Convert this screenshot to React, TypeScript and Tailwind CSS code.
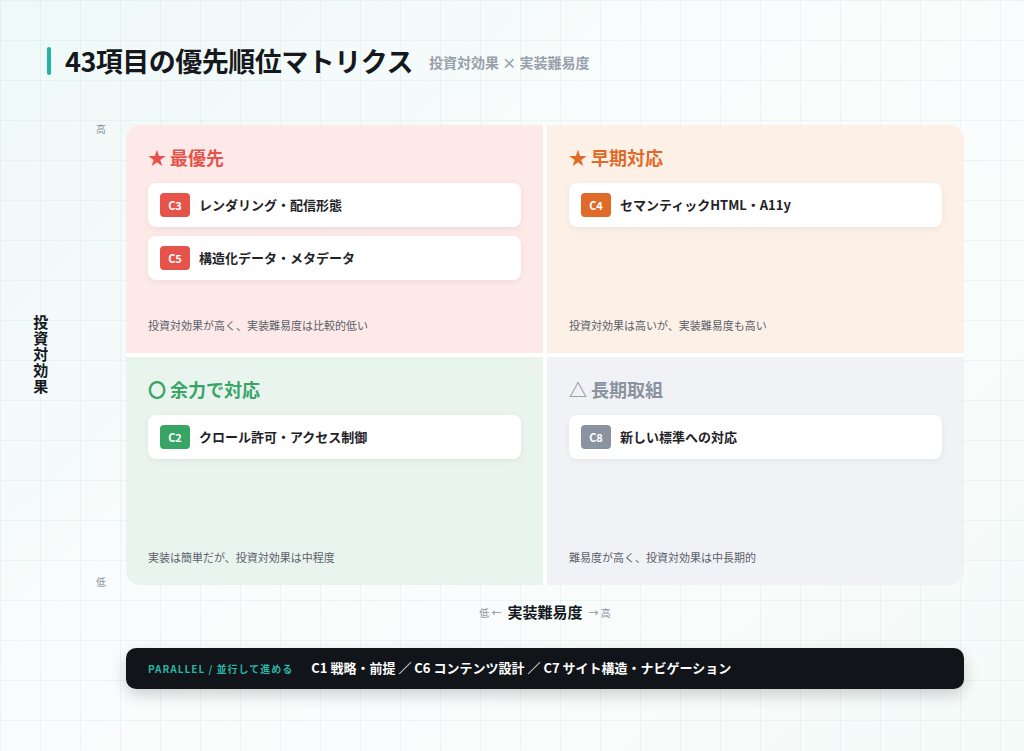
import React from "react";

type Item = { code: string; label: string };
type Quad = {
  title: string;
  items: Item[];
  note: string;
  bg: string;
  fg: string;
  badge: string;
};

const quads: Quad[] = [
  {
    title: "★ 最優先",
    items: [
      { code: "C3", label: "レンダリング・配信形態" },
      { code: "C5", label: "構造化データ・メタデータ" },
    ],
    note: "投資対効果が高く、実装難易度は比較的低い",
    bg: "bg-[#fde9e7]",
    fg: "text-[#e5534b]",
    badge: "bg-[#e5534b]",
  },
  {
    title: "★ 早期対応",
    items: [{ code: "C4", label: "セマンティックHTML・A11y" }],
    note: "投資対効果は高いが、実装難易度も高い",
    bg: "bg-[#fdf0e6]",
    fg: "text-[#e06a28]",
    badge: "bg-[#e06a28]",
  },
  {
    title: "〇 余力で対応",
    items: [{ code: "C2", label: "クロール許可・アクセス制御" }],
    note: "実装は簡単だが、投資対効果は中程度",
    bg: "bg-[#eaf4ee]",
    fg: "text-[#38a567]",
    badge: "bg-[#38a567]",
  },
  {
    title: "△ 長期取組",
    items: [{ code: "C8", label: "新しい標準への対応" }],
    note: "難易度が高く、投資対効果は中長期的",
    bg: "bg-[#f1f2f6]",
    fg: "text-[#8a93a0]",
    badge: "bg-[#8a93a0]",
  },
];

function Quadrant({ q }: { q: Quad }) {
  return (
    <div className={`${q.bg} flex flex-col px-[22px] pt-[20px] pb-[20px] h-[228px]`}>
      <h2 className={`${q.fg} text-[18px] font-bold leading-[24px] mb-[14px]`}>{q.title}</h2>
      <div className="flex flex-col gap-[9px]">
        {q.items.map((it) => (
          <div
            key={it.code}
            className="bg-white rounded-lg h-[44px] flex items-center px-[12px] gap-[9px] shadow-[0_2px_6px_rgba(0,0,0,0.06)]"
          >
            <span
              className={`${q.badge} text-white text-[11px] font-bold rounded-[4px] w-[30px] h-[24px] flex items-center justify-center`}
            >
              {it.code}
            </span>
            <span className="text-[13px] font-bold text-[#1f2328]">{it.label}</span>
          </div>
        ))}
      </div>
      <p className="mt-auto text-[11px] text-[#5b616b]">{q.note}</p>
    </div>
  );
}

export default function App() {
  return (
    <div
      className="w-[1024px] h-[751px] overflow-hidden bg-[#f6fbfa] bg-[linear-gradient(rgba(170,210,205,0.18)_1px,transparent_1px),linear-gradient(90deg,rgba(170,210,205,0.18)_1px,transparent_1px),linear-gradient(135deg,#eef9f7,#fbfdfd_50%,#f4fbf9)] bg-[size:40px_40px,40px_40px,100%_100%]"
      style={{ fontFamily: '"Noto Sans CJK JP", "Noto Sans", sans-serif' }}
    >
      <div className="flex items-center pt-[44px] pl-[47px] h-[78px]">
        <div className="w-[4px] h-[28px] rounded-full bg-[#22b3a6] mr-[14px]" />
        <h1 className="text-[27px] font-bold text-[#15181c] tracking-[-0.5px]">43項目の優先順位マトリクス</h1>
        <span className="ml-[16px] text-[14px] font-bold text-[#97a0ab] mt-[2px]">投資対効果 × 実装難易度</span>
      </div>

      <div className="flex mt-[47px]">
        <div className="w-[126px] flex h-[460px] relative">
          <div className="w-[80px] flex items-center justify-center">
            <span className="[writing-mode:vertical-rl] text-[15px] font-bold text-[#15181c] tracking-[1px]">投資対効果</span>
          </div>
          <div className="w-[46px] flex flex-col justify-between text-[10px] text-[#8a939d] pl-[16px]">
            <span className="-mt-[4px]">高</span>
            <span className="-mb-[4px]">低</span>
          </div>
        </div>
        <div className="w-[838px] grid grid-cols-2 gap-[4px] rounded-[14px] overflow-hidden bg-white">
          {quads.map((q) => (
            <Quadrant key={q.title} q={q} />
          ))}
        </div>
      </div>

      <div className="flex items-center justify-center ml-[126px] w-[838px] mt-[16px] gap-[6px]">
        <span className="text-[10px] text-[#8a939d]">低 ←</span>
        <span className="text-[15px] font-bold text-[#15181c]">実装難易度</span>
        <span className="text-[10px] text-[#8a939d]">→ 高</span>
      </div>

      <div className="ml-[126px] w-[838px] mt-[24px] h-[41px] rounded-[10px] bg-[#111418] flex items-center px-[22px] gap-[18px] shadow-[0_6px_16px_rgba(0,0,0,0.18)]">
        <span className="text-[10px] font-bold text-[#2bb3a6] tracking-[1px]">PARALLEL / 並行して進める</span>
        <span className="text-[13px] font-bold text-white">C1 戦略・前提 ／ C6 コンテンツ設計 ／ C7 サイト構造・ナビゲーション</span>
      </div>
    </div>
  );
}
